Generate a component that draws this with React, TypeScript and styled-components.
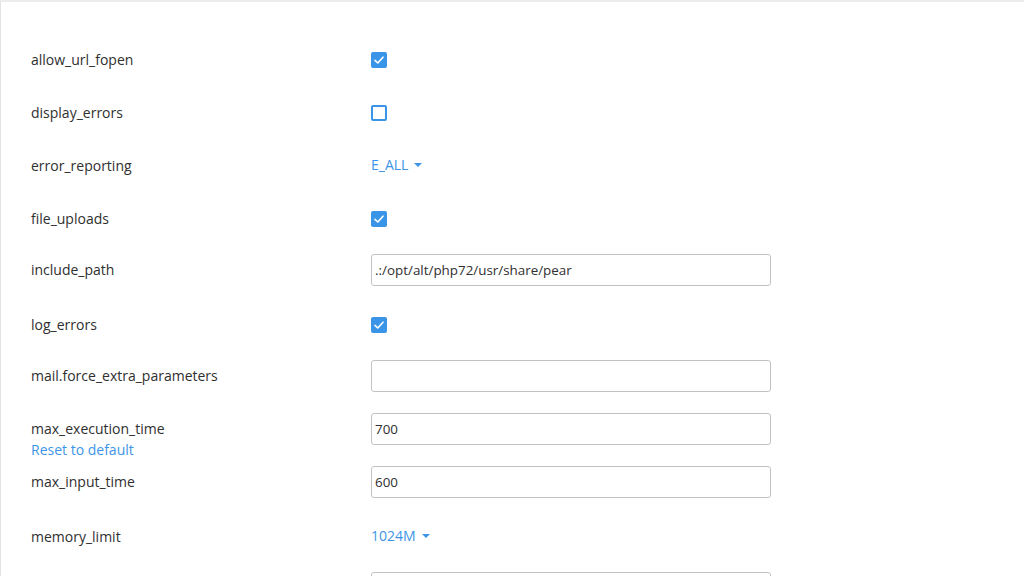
import * as React from "react"
import styled, { createGlobalStyle } from "styled-components"

const GlobalStyle = createGlobalStyle`
  html, body {
    margin: 0;
    padding: 0;
    background: #fff;
  }
  body {
    font-family: "Open Sans", "Noto Sans", sans-serif;
    color: #333;
  }
`

type Control =
  | { kind: "checkbox"; checked: boolean }
  | { kind: "input"; value: string }
  | { kind: "select"; value: string }

interface Setting {
  name: string
  control: Control
  modified?: boolean
}

const settings: Setting[] = [
  { name: "allow_url_fopen", control: { kind: "checkbox", checked: true } },
  { name: "display_errors", control: { kind: "checkbox", checked: false } },
  { name: "error_reporting", control: { kind: "select", value: "E_ALL" } },
  { name: "file_uploads", control: { kind: "checkbox", checked: true } },
  { name: "include_path", control: { kind: "input", value: ".:/opt/alt/php72/usr/share/pear" } },
  { name: "log_errors", control: { kind: "checkbox", checked: true } },
  { name: "mail.force_extra_parameters", control: { kind: "input", value: "" } },
  { name: "max_execution_time", control: { kind: "input", value: "700" }, modified: true },
  { name: "max_input_time", control: { kind: "input", value: "600" } },
  { name: "memory_limit", control: { kind: "select", value: "1024M" } },
  { name: "open_basedir", control: { kind: "input", value: "" } },
]

export default function App() {
  return (
    <>
      <GlobalStyle />
      <Panel>
        {settings.map(s => (
          <Row key={s.name} $plain={s.control.kind !== "input"}>
            <Label>
              {s.name}
              {s.modified && <ResetLink href="#">Reset to default</ResetLink>}
            </Label>
            <Cell>{renderControl(s.control)}</Cell>
          </Row>
        ))}
      </Panel>
    </>
  )
}

function renderControl(c: Control) {
  if (c.kind === "checkbox") {
    return (
      <Checkbox $checked={c.checked}>
        {c.checked && (
          <svg width="12" height="12" viewBox="0 0 12 12">
            <path d="M2 6.3 L4.8 9 L10 3.2" fill="none" stroke="#fff" strokeWidth="1.6" strokeLinecap="round" strokeLinejoin="round" />
          </svg>
        )}
      </Checkbox>
    )
  }
  if (c.kind === "select") {
    return (
      <Dropdown>
        {c.value}
        <Caret />
      </Dropdown>
    )
  }
  return <TextInput type="text" defaultValue={c.value} />
}

const Panel = styled.div`
  border-top: 2px solid #ececec;
  border-left: 1px solid #e3e3e3;
  padding: 40px 0 0 30px;
  height: 576px;
  box-sizing: border-box;
  overflow: hidden;
`

const Row = styled.div<{ $plain: boolean }>`
  display: grid;
  grid-template-columns: 340px 400px;
  align-items: start;
  height: 53px;
  box-sizing: border-box;
  padding-top: ${p => (p.$plain ? "2px" : "0")};
`

const Label = styled.div`
  display: flex;
  flex-direction: column;
  align-items: flex-start;
  font-size: 14px;
  line-height: 21px;
  padding-top: 5px;
  color: #2f2f2f;
`

const ResetLink = styled.a`
  color: #3d95e6;
  text-decoration: none;
`

const Cell = styled.div`
  height: 32px;
  display: flex;
  align-items: center;
`

const Checkbox = styled.span<{ $checked: boolean }>`
  width: 16px;
  height: 16px;
  box-sizing: border-box;
  border-radius: 2px;
  display: flex;
  align-items: center;
  justify-content: center;
  background: ${p => (p.$checked ? "#3a95e8" : "#fff")};
  border: 2px solid #3a95e8;
`

const Dropdown = styled.span`
  display: flex;
  align-items: center;
  gap: 6px;
  font-size: 14px;
  line-height: 18px;
  margin-top: -2px;
  color: #3d95e6;
  cursor: pointer;
`

const Caret = styled.span`
  width: 0;
  height: 0;
  border-left: 4px solid transparent;
  border-right: 4px solid transparent;
  border-top: 4px solid #3d95e6;
`

const TextInput = styled.input`
  width: 400px;
  height: 32px;
  box-sizing: border-box;
  border: 1px solid #c2c2c2;
  border-radius: 3px;
  padding: 0 3px;
  font-family: "Open Sans", "Noto Sans", sans-serif;
  font-size: 13.4px;
  color: #2f2f2f;
  outline: none;
`
